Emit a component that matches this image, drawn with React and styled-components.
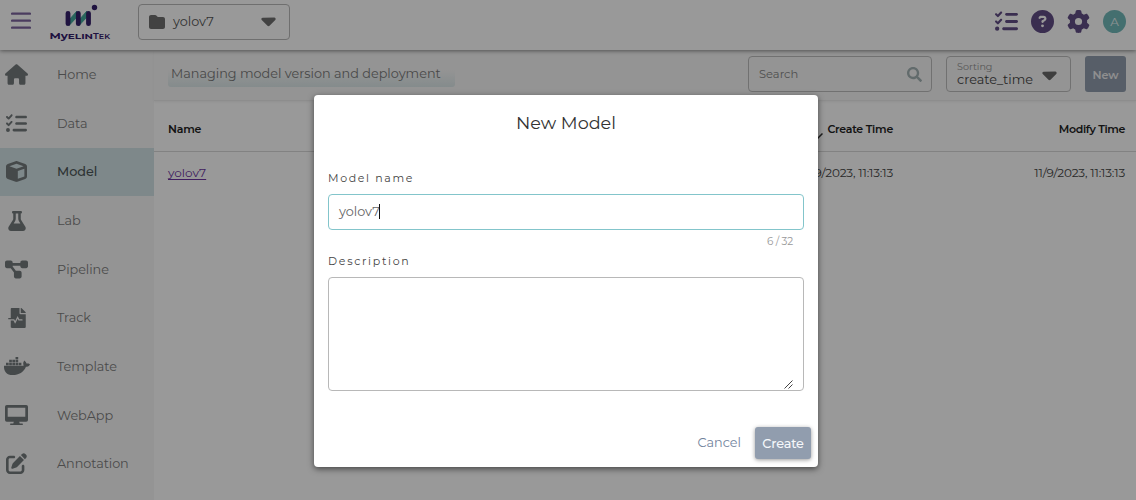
import React from "react";
import styled, { createGlobalStyle } from "styled-components";
import {
  FaHouse, FaListCheck, FaCube, FaFlask, FaDiagramProject,
  FaDocker, FaPenToSquare, FaFolder, FaCaretDown, FaCircleQuestion, FaGear,
} from "react-icons/fa6";
import { FaFileMedicalAlt, FaSearch } from "react-icons/fa";
import { MdArrowDownward } from "react-icons/md";

const Global = createGlobalStyle`
  * { box-sizing: border-box; }
  body { margin: 0; background: #fff; font-family: "Montserrat", "Inter", "Liberation Sans", sans-serif; font-size: 13px; overflow: hidden; }
`;

const Page = styled.div`
  height: 500px;
  display: flex;
  flex-direction: column;
  position: relative;
`;

const Text = styled.span`
  font-size: ${(p) => p.$size || 12.8}px;
  font-weight: ${(p) => p.$weight || 400};
  letter-spacing: ${(p) => p.$track || 0}px;
  color: ${(p) => p.$color || "#6b6b6b"};
  line-height: 16px;
  white-space: nowrap;
`;

const Header = styled.header`
  height: 50px;
  flex: none;
  display: flex;
  align-items: flex-start;
  padding: 0 10px 0 11px;
  background: #fff;
  box-shadow: 0 1px 4px rgba(0, 0, 0, 0.45);
  z-index: 1;
`;

const MenuIcon = styled.svg`
  width: 20px;
  height: 18px;
  margin-top: 12px;
`;

const Logo = styled.svg`
  width: 64px;
  height: 40px;
  margin: 2px 0 0 17px;
`;

const ProjectSelect = styled.div`
  width: 152px;
  height: 36px;
  margin: 4px 0 0 26px;
  padding: 0 9px 0 10px;
  display: flex;
  align-items: center;
  gap: 8px;
  border: 1px solid #b9b9b9;
  border-radius: 4px;
  color: #6f6f6f;
  & > :last-child { margin: -3px 0 0 auto; }
`;

const Actions = styled.div`
  margin-left: auto;
  margin-top: 9px;
  display: flex;
  align-items: center;
  gap: 13px;
  color: #624d86;
`;

const Avatar = styled.div`
  width: 23px;
  height: 23px;
  margin-top: 1px;
  border-radius: 50%;
  background: #72b9ba;
  display: flex;
  align-items: center;
  justify-content: center;
`;

const Body = styled.div`
  flex: 1;
  display: flex;
  min-height: 0;
`;

const Sidebar = styled.nav`
  width: 154px;
  flex: none;
  padding-top: 0.6px;
  display: flex;
  flex-direction: column;
  gap: 0.65px;
  background: #f7f7f7;
`;

const NavItem = styled.div`
  height: 48px;
  flex: none;
  display: flex;
  align-items: center;
  background: ${(p) => (p.$active ? "#d3e3e6" : "transparent")};
`;

const NavIcon = styled.span`
  width: 57px;
  padding-left: ${(p) => p.$left}px;
  display: flex;
  color: #737a7c;
`;

const NavLabel = styled(Text)`
  padding-top: 1px;
`;

const Main = styled.main`
  flex: 1;
  min-width: 0;
`;

const Toolbar = styled.div`
  height: 51px;
  display: flex;
  align-items: flex-start;
  padding: 6px 10px 0 14px;
  background: #f7f7f7;
  border-bottom: 1px solid #ececec;
  box-shadow: 0 1px 2px rgba(0, 0, 0, 0.06);
`;

const Caption = styled.div`
  width: 287px;
  height: 24px;
  margin-top: 7px;
  padding: 2px 3px;
  border-radius: 3px;
  background: linear-gradient(#f7f7f7 30%, #dde9ea);
`;

const SearchBox = styled.div`
  width: 184px;
  height: 36px;
  margin-left: auto;
  padding: 0 9px 0 10px;
  display: flex;
  align-items: center;
  justify-content: space-between;
  border: 1px solid #bdbdbd;
  border-radius: 4px;
  color: #a4b3b4;
`;

const SortBox = styled.div`
  width: 125px;
  height: 36px;
  margin: 0 14px;
  padding: 0 9px 0 10px;
  display: flex;
  align-items: center;
  justify-content: space-between;
  border: 1px solid #bdbdbd;
  border-radius: 4px;
  color: #686868;
`;

const SortLabels = styled.div`
  display: flex;
  flex-direction: column;
  margin-top: -3px;
  & > * { line-height: 13px; }
`;

const Button = styled.button`
  width: ${(p) => p.$w}px;
  height: ${(p) => p.$h}px;
  flex: none;
  padding: 0;
  border: 0;
  border-radius: 3px;
  font-family: inherit;
  background: #919dae;
  box-shadow: ${(p) => (p.$raised ? "0 1px 4px rgba(0,0,0,.4)" : "none")};
`;

const Row = styled.div`
  height: ${(p) => p.$h}px;
  padding: ${(p) => p.$top || 0}px 11px 0 14px;
  display: grid;
  grid-template-columns: 1fr 300px 232px;
  align-items: center;
  border-bottom: ${(p) => (p.$line ? "1px solid #d9d9d9" : "none")};
`;

const Cell = styled.div`
  display: flex;
  align-items: center;
  justify-content: ${(p) => (p.$end ? "flex-end" : "flex-start")};
`;

const SortArrow = styled(MdArrowDownward)`
  margin: 7px 1px -3px 0;
`;

const NameLink = styled(Text)`
  text-decoration: underline;
  text-underline-offset: 2px;
  text-decoration-skip-ink: none;
`;

const Overlay = styled.div`
  position: absolute;
  inset: 0;
  z-index: 2;
  padding: 95px 0 0 314px;
  background: rgba(0, 0, 0, 0.4);
`;

const Dialog = styled.section`
  width: 504px;
  height: 372px;
  padding: 0 14px;
  display: flex;
  flex-direction: column;
  background: #fff;
  border-radius: 4px;
  box-shadow: 0 2px 6px rgba(0, 0, 0, 0.55);
`;

const Title = styled.div`
  margin-top: 20px;
  height: 55px;
  text-align: center;
`;

const Field = styled.div`
  height: ${(p) => p.$h}px;
  margin-top: 8px;
  padding: 0 10px 1px;
  display: flex;
  align-items: center;
  border: 1px solid ${(p) => (p.$focus ? "#83c5cb" : "#b8b8b8")};
  border-radius: 4px;
`;

const Caret = styled.i`
  width: 1px;
  height: 15px;
  margin-left: -1px;
  background: #111;
`;

const Counter = styled.div`
  height: 23px;
  padding: 2px 11px 0 0;
  text-align: right;
`;

const Grip = styled.svg`
  width: 9px;
  height: 9px;
  margin-left: auto;
  align-self: flex-end;
`;

const Footer = styled.div`
  margin: 36px -7px 0 0;
  display: flex;
  align-items: center;
  justify-content: flex-end;
  gap: 14px;
`;

const MonitorIcon = ({ size }) => (
  <svg width={size} height={(size * 20) / 23} viewBox="0 0 23 20" fill="currentColor">
    <path
      fillRule="evenodd"
      d="M1.800 0H21.200Q23 0 23 1.800V14.900Q23 16.700 21.200 16.700H14.200L14.700 18.500H17.200Q18 18.500 18 19.200T17.200 20H5.800Q5 20 5 19.200T5.800 18.500H8.300L8.800 16.700H1.800Q0 16.700 0 14.900V1.800Q0 0 1.800 0ZM2.700 2.700V11.700H20.300V2.700Z"
    />
  </svg>
);

const nav = [
  ["Home", FaHouse, 23, 5],
  ["Data", FaListCheck, 21, 6],
  ["Model", FaCube, 21, 6],
  ["Lab", FaFlask, 20, 7],
  ["Pipeline", FaDiagramProject, 23, 5],
  ["Track", FaFileMedicalAlt, 20, 7],
  ["Template", FaDocker, 26, 4],
  ["WebApp", MonitorIcon, 23, 5],
  ["Annotation", FaPenToSquare, 21, 6],
];

export default function App() {
  return (
    <Page>
      <Global />
      <Header>
        <MenuIcon viewBox="0 0 20 18">
          <path d="M1 1.7H19M1 8.7H19M1 15.7H19" stroke="#7d659f" strokeWidth="2.2" strokeLinecap="round" />
        </MenuIcon>
        <Logo viewBox="48 2 64 40">
          <path d="M69 25.500V20L77 11V17ZM79 25.500V20L87 11V17Z" fill="#43a99b" stroke="#43a99b" />
          <path d="M68 13.300V23.700M78.300 13.300V23.700M88.500 13.300V23.700" stroke="#35206b" strokeWidth="4.800" strokeLinecap="round" />
          <circle cx="94.500" cy="7.500" r="2.700" fill="#35206b" />
          <g fill="#35206b">
            <text x="49.500" y="38.500" fontSize="8.500" fontWeight="700" textLength="43.500" lengthAdjust="spacingAndGlyphs">
              My<tspan fontSize="7.500">ELIN</tspan>
            </text>
            <text x="93" y="38.500" fontSize="9" fontWeight="600" textLength="17" lengthAdjust="spacingAndGlyphs">
              T<tspan fontSize="7.500">EK</tspan>
            </text>
          </g>
        </Logo>
        <ProjectSelect>
          <FaFolder size={16} />
          <Text $color="#555">yolov7</Text>
          <FaCaretDown size={23} />
        </ProjectSelect>
        <Actions>
          <FaListCheck size={23} />
          <FaCircleQuestion size={23} />
          <FaGear size={23} />
          <Avatar><Text $size={12} $color="#e8f4f4">A</Text></Avatar>
        </Actions>
      </Header>
      <Body>
        <Sidebar>
          {nav.map(([label, Icon, size, left]) => (
            <NavItem key={label} $active={label === "Model"}>
              <NavIcon $left={left}><Icon size={size} /></NavIcon>
              <NavLabel
                $track={-0.06}
                $weight={label === "Model" ? 500 : 400}
                $color={label === "Model" ? "#4d5658" : "#7d7d7d"}
              >
                {label}
              </NavLabel>
            </NavItem>
          ))}
        </Sidebar>
        <Main>
          <Toolbar>
            <Caption><Text $color="#7a7a7a">Managing model version and deployment</Text></Caption>
            <SearchBox>
              <Text $size={11.5} $color="#868686">Search</Text>
              <FaSearch size={15} />
            </SearchBox>
            <SortBox>
              <SortLabels>
                <Text $size={9.6} $color="#929292">Sorting</Text>
                <Text $color="#444">create_time</Text>
              </SortLabels>
              <FaCaretDown size={23} />
            </SortBox>
            <Button $w={41} $h={36}><Text $size={11.2} $weight={600} $color="#eee">New</Text></Button>
          </Toolbar>
          <Row $h={51} $top={6} $line>
            <Cell><Text $size={11} $weight={600} $track={-0.2} $color="#222">Name</Text></Cell>
            <Cell $end>
              <SortArrow size={18} color="#333" />
              <Text $size={11} $weight={600} $track={-0.25} $color="#222">Create Time</Text>
            </Cell>
            <Cell $end><Text $size={11} $weight={600} $track={-0.35} $color="#222">Modify Time</Text></Cell>
          </Row>
          <Row $h={41}>
            <Cell><NameLink $size={12} $color="#6d35a0">yolov7</NameLink></Cell>
            <Cell $end><Text $size={12} $track={-0.16} $color="#444">11/9/2023, 11:13:13</Text></Cell>
            <Cell $end><Text $size={12} $track={-0.16} $color="#444">11/9/2023, 11:13:13</Text></Cell>
          </Row>
        </Main>
      </Body>
      <Overlay>
        <Dialog>
          <Title><Text $size={17.6} $color="#333">New Model</Text></Title>
          <Text $size={11} $track={1.65} $color="#444">Model name</Text>
          <Field $h={36} $focus><Text $color="#666">yolov7</Text><Caret /></Field>
          <Counter><Text $size={10.4} $track={-0.15} $color="#999">6 / 32</Text></Counter>
          <Text $size={11} $track={1.7} $color="#444">Description</Text>
          <Field $h={114}>
            <Grip viewBox="0 0 9 9"><path d="M.5 8.500L8.500 .5M4.500 8.500L8.500 4.500" stroke="#444" /></Grip>
          </Field>
          <Footer>
            <Text $color="#71829c">Cancel</Text>
            <Button $w={56} $h={32} $raised><Text $weight={500} $track={-0.15} $color="#f5f7fa">Create</Text></Button>
          </Footer>
        </Dialog>
      </Overlay>
    </Page>
  );
}
